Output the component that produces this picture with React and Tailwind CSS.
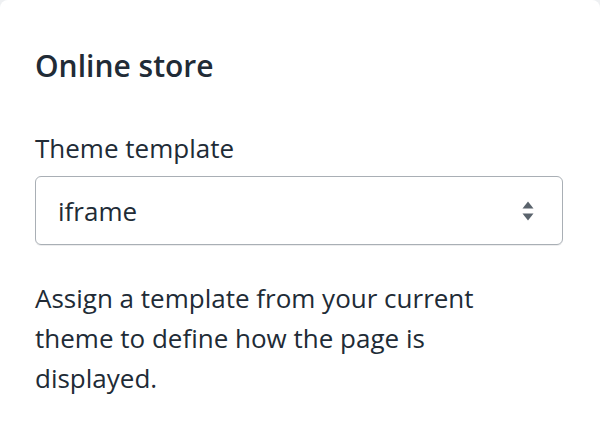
export default function App() {
  return (
    <div className="w-[600px] h-[422px] bg-[#eef0f2] overflow-hidden" style={{ fontFamily: '"Open Sans", "Noto Sans", sans-serif' }}>
      <div className="h-full bg-white rounded-t-[8px] px-[35px] pt-[44px] text-[#212b36]">
        <h2 className="text-[30px] leading-[44px] font-semibold">Online store</h2>
        <div className="mt-[40px] text-[26px] leading-[40px]">Theme template</div>
        <div className="mt-[8px] h-[69px] w-[528px] rounded-[6px] border border-[#a9afb5] shadow-[0_1px_0_rgba(22,29,37,0.08)] flex items-center justify-between pl-[22px] pr-[28px]">
          <span className="text-[26px] leading-[40px]">iframe</span>
          <svg width="12" height="20" viewBox="0 0 12 20" className="text-[#5a636c]">
            <path d="M6 0.5 L11.5 7.5 H0.5 Z" fill="currentColor" />
            <path d="M6 19.5 L11.5 12.5 H0.5 Z" fill="currentColor" />
          </svg>
        </div>
        <p className="mt-[33px] text-[26px] leading-[40px] w-[470px]">
          Assign a template from your current theme to define how the page is displayed.
        </p>
      </div>
    </div>
  );
}
